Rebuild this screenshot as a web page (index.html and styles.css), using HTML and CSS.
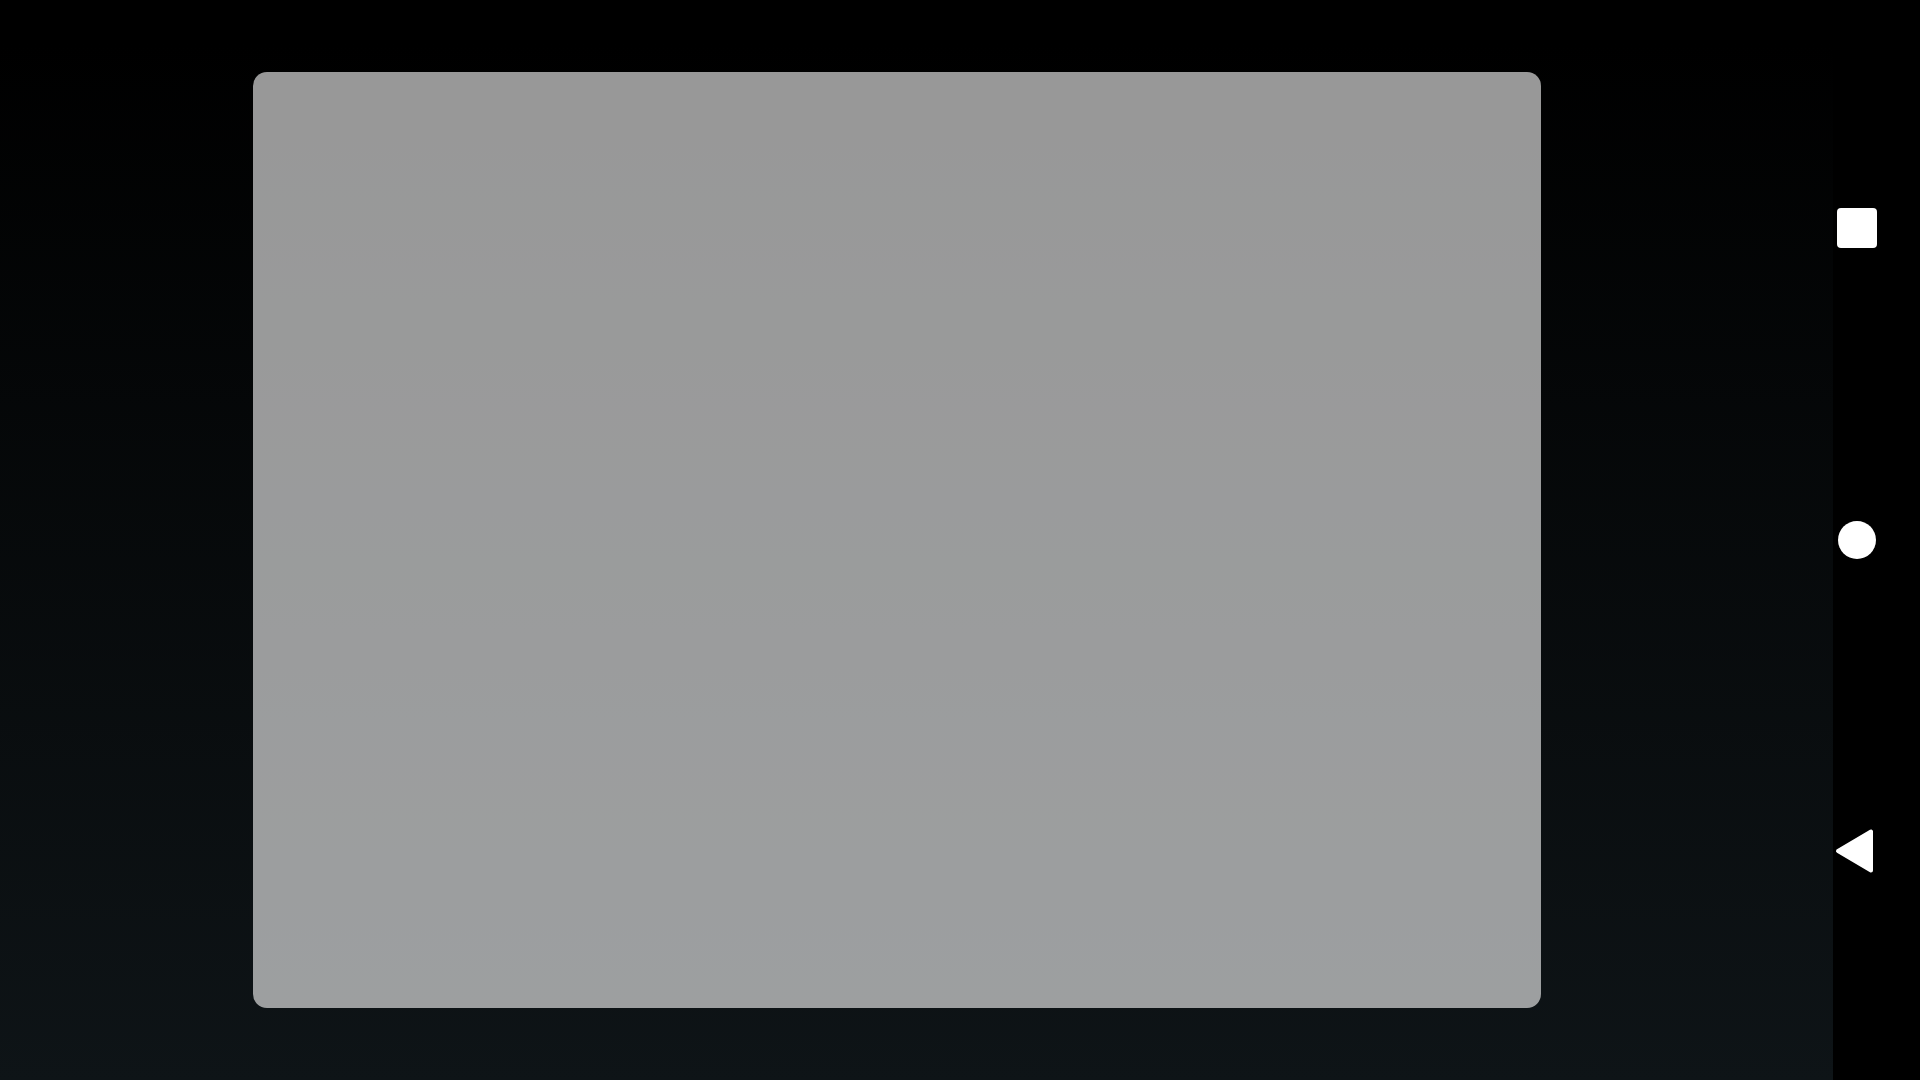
FILE: index.html
```html
<!DOCTYPE html>
<html lang="en">
<head>
    <meta charset="UTF-8">
    <meta name="viewport" content="width=device-width, initial-scale=1.0">
    <title>Screen</title>
    <link rel="stylesheet" href="styles.css">
</head>
<body>

    <main class="screen">
        <div class="card"></div>
    </main>

    <nav class="nav-bar">
        <svg class="nav-icon" viewBox="0 0 48 48">
            <rect x="4" y="4" width="40" height="40" rx="4"></rect>
        </svg>
        <svg class="nav-icon" viewBox="0 0 48 48">
            <circle cx="24" cy="24" r="19"></circle>
        </svg>
        <svg class="nav-icon" viewBox="0 0 48 48">
            <polygon class="back" points="5,23 38,3.5 38,42.5"></polygon>
        </svg>
    </nav>

</body>
</html>
```

FILE: styles.css
```css
html, body {
    height: 100%;
}
body {
    margin: 0;
    display: flex;
    background-color: #000;
    font-family: "Roboto", sans-serif;
    overflow: hidden;
}
.screen {
    flex: 1;
    padding: 72px 292px 72px 253px;
    background: linear-gradient(180deg, #000 0%, #000 4%, #0e1417 100%);
}
.card {
    height: 936px;
    border-radius: 14px;
    background-color: rgba(255, 255, 255, 0.595);
}
.nav-bar {
    width: 87px;
    display: flex;
    flex-direction: column;
    justify-content: center;
    gap: 264px;
    background-color: #000;
}
.nav-icon {
    display: block;
    width: 48px;
    height: 48px;
    fill: #fff;
}
.back {
    stroke: #fff;
    stroke-width: 4;
    stroke-linejoin: round;
}
```
